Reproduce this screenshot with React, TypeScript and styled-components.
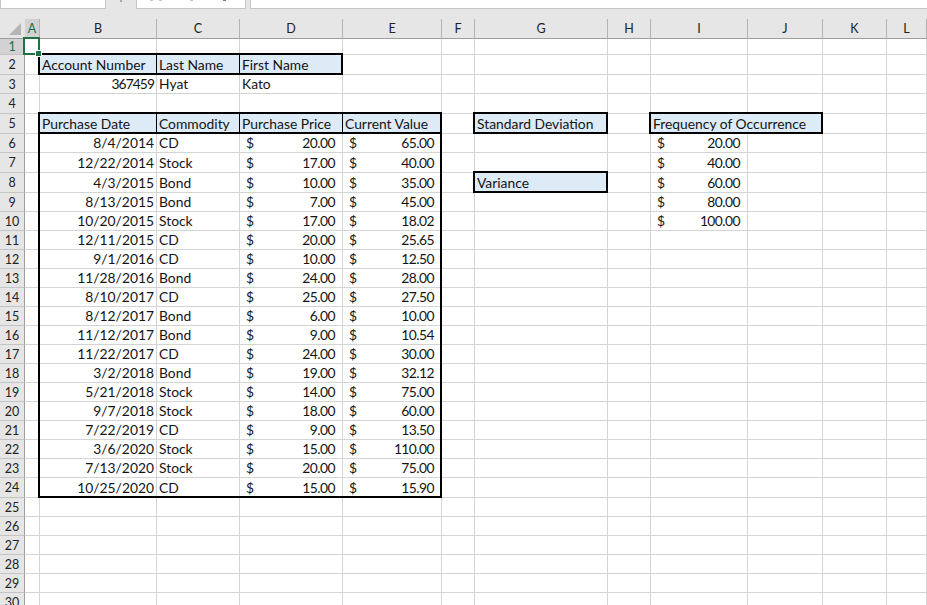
import { createGlobalStyle, styled } from "styled-components";

const GlobalStyle = createGlobalStyle`
  html, body {
    margin: 0;
    padding: 0;
    background: #ffffff;
    overflow: hidden;
  }
`;

const Window = styled.div`
  width: 927px;
  height: 605px;
  overflow: hidden;
  background: #e6e6e6;
  font-family: Lato, "Liberation Sans", sans-serif;
  font-size: 13.85px;
  color: #141414;
`;

const FormulaBar = styled.div`
  height: 19px;
  display: flex;
  align-items: flex-start;
  background: #e6e6e6;
`;

const NameBox = styled.div`
  width: 106px;
  height: 9px;
  overflow: hidden;
  padding-left: 10px;
  background: #fff;
  border: 1px solid #c6c6c6;
  border-top: none;
  box-sizing: border-box;
`;

const NameText = styled.div`
  margin-top: -13px;
  line-height: 16px;
  color: #2a5f8a;
`;

const Grip = styled.div`
  width: 2px;
  height: 2px;
  margin: 0 14px 0 14px;
  background: #a8a8a8;
`;

const FnBox = styled.div`
  width: 110px;
  height: 9px;
  display: flex;
  padding-left: 13px;
  background: #fff;
  border: 1px solid #c6c6c6;
  border-top: none;
  box-sizing: border-box;
`;

const FnMark = styled.div<{ $gap: number; $dark?: boolean }>`
  width: 3px;
  height: 1px;
  margin-left: ${(p) => p.$gap}px;
  background: ${(p) => (p.$dark ? "#7a7a7a" : "#c8c8c8")};
`;

const FormulaInput = styled.div`
  flex: 1;
  height: 9px;
  margin-left: 4px;
  background: #fff;
  border-left: 1px solid #c6c6c6;
  border-bottom: 1px solid #c6c6c6;
  box-sizing: border-box;
`;

const Sheet = styled.div`
  display: grid;
  grid-template-columns: 25px 15px 117px 83px 103px 99px 33px 133px 43px 97px 75px 64px 40px;
  grid-template-rows: 20px 16px 20px 19px 20px 20px 19px 20px 20px 19px 19px repeat(13, 19px) 20px repeat(6, 19px);
  background: #fff;
`;

const Corner = styled.div`
  background: #e6e6e6;
  border-bottom: 1px solid #9e9e9e;
  box-sizing: border-box;
`;

const Triangle = styled.div`
  width: 0;
  height: 0;
  margin: 4px 0 0 9px;
  border-style: solid;
  border-width: 0 0 12px 12px;
  border-color: transparent transparent #b5b5b5 transparent;
`;

const ColHead = styled.div<{ $active?: boolean }>`
  display: flex;
  align-items: center;
  justify-content: center;
  background: ${(p) => (p.$active ? "#d2d2d2" : "#e6e6e6")};
  color: ${(p) => (p.$active ? "#1f6e43" : "#222")};
  border-right: 1px solid #b4b4b4;
  border-bottom: 1px solid #9e9e9e;
  box-sizing: border-box;
  font-size: 12.5px;
`;

const RowHead = styled.div<{ $active?: boolean }>`
  display: flex;
  align-items: center;
  justify-content: center;
  background: ${(p) => (p.$active ? "#d2d2d2" : "#e6e6e6")};
  color: ${(p) => (p.$active ? "#1f6e43" : "#222")};
  border-right: 1px solid #9e9e9e;
  border-bottom: 1px solid #c4c4c4;
  box-sizing: border-box;
  font-size: 12.5px;
`;

type Edges = { t?: boolean; b?: boolean; l?: boolean; r?: boolean };

const Cell = styled.div<{
  $head?: boolean;
  $right?: boolean;
  $divider?: boolean;
  $spill?: boolean;
  $edges?: Edges;
}>`
  position: relative;
  display: flex;
  align-items: flex-end;
  justify-content: ${(p) => (p.$right ? "flex-end" : "flex-start")};
  min-width: 0;
  white-space: nowrap;
  padding: 0 ${(p) => (p.$right ? "2px" : "1px")} 1px 2px;
  box-sizing: border-box;
  line-height: 16px;
  background: ${(p) => (p.$head ? "#ddebf7" : "#fff")};
  border-right: 1px solid
    ${(p) => (p.$divider ? "#000" : p.$spill ? "#ddebf7" : "#d4d4d4")};
  border-bottom: 1px solid #d4d4d4;

  /* thick black range outline, sits on top of the gridlines */
  &::after {
    content: "";
    display: ${(p) => (p.$edges ? "block" : "none")};
    position: absolute;
    pointer-events: none;
    top: ${(p) => (p.$edges?.t ? "-2px" : "0")};
    left: ${(p) => (p.$edges?.l ? "-2px" : "0")};
    right: -1px;
    bottom: -1px;
    border-style: solid;
    border-color: #000;
    border-width: ${(p) => (p.$edges?.t ? "2px" : "0")} ${(p) => (p.$edges?.r ? "2px" : "0")}
      ${(p) => (p.$edges?.b ? "2px" : "0")} ${(p) => (p.$edges?.l ? "2px" : "0")};
  }
`;

const Accounting = styled(Cell)`
  justify-content: space-between;
  padding: 0 7px 1px 6px;
`;

const SpillText = styled.span`
  position: relative;
  z-index: 1;
`;

const Digits = styled.span`
  letter-spacing: -0.55px;
`;

const AccountDigits = styled.span`
  letter-spacing: -0.95px;
`;

const Selection = styled.div`
  position: absolute;
  z-index: 3;
  top: -2px;
  left: -2px;
  right: -1px;
  bottom: -1px;
  border: 2px solid #1f7246;

  &::after {
    content: "";
    position: absolute;
    right: -4px;
    bottom: -4px;
    width: 5px;
    height: 5px;
    background: #1f7246;
    border: 1px solid #fff;
  }
`;

const columns = ["A", "B", "C", "D", "E", "F", "G", "H", "I", "J", "K", "L"];

const purchases = [
  ["8/4/2014", "CD", "20.00", "65.00"],
  ["12/22/2014", "Stock", "17.00", "40.00"],
  ["4/3/2015", "Bond", "10.00", "35.00"],
  ["8/13/2015", "Bond", "7.00", "45.00"],
  ["10/20/2015", "Stock", "17.00", "18.02"],
  ["12/11/2015", "CD", "20.00", "25.65"],
  ["9/1/2016", "CD", "10.00", "12.50"],
  ["11/28/2016", "Bond", "24.00", "28.00"],
  ["8/10/2017", "CD", "25.00", "27.50"],
  ["8/12/2017", "Bond", "6.00", "10.00"],
  ["11/12/2017", "Bond", "9.00", "10.54"],
  ["11/22/2017", "CD", "24.00", "30.00"],
  ["3/2/2018", "Bond", "19.00", "32.12"],
  ["5/21/2018", "Stock", "14.00", "75.00"],
  ["9/7/2018", "Stock", "18.00", "60.00"],
  ["7/22/2019", "CD", "9.00", "13.50"],
  ["3/6/2020", "Stock", "15.00", "110.00"],
  ["7/13/2020", "Stock", "20.00", "75.00"],
  ["10/25/2020", "CD", "15.00", "15.90"],
];

const frequency = ["20.00", "40.00", "60.00", "80.00", "100.00"];

const headers: Record<string, string> = {
  B2: "Account Number",
  C2: "Last Name",
  D2: "First Name",
  B5: "Purchase Date",
  C5: "Commodity",
  D5: "Purchase Price",
  E5: "Current Value",
  G5: "Standard Deviation",
  G8: "Variance",
  I5: "Frequency of Occurrence",
  J5: "",
};

function edgesFor(col: string, row: number): Edges | undefined {
  if (row === 2 && "BCD".includes(col)) {
    return { t: true, b: true, l: col === "B", r: col === "D" };
  }
  if (row === 5 && "BCDE".includes(col)) {
    return { t: true, b: true, l: col === "B", r: col === "E" };
  }
  if (row >= 6 && row <= 24 && "BCDE".includes(col)) {
    return { b: row === 24, l: col === "B", r: col === "E" };
  }
  if ((row === 5 || row === 8) && col === "G") {
    return { t: true, b: true, l: true, r: true };
  }
  if (row === 5 && (col === "I" || col === "J")) {
    return { t: true, b: true, l: col === "I", r: col === "J" };
  }
  return undefined;
}

function renderCell(col: string, row: number) {
  const key = `${col}${row}`;
  const edges = edgesFor(col, row);
  const divider = (row === 2 && "BC".includes(col)) || (row === 5 && "BCD".includes(col));

  if (key in headers) {
    return (
      <Cell key={key} $head $edges={edges} $divider={divider} $spill={key === "I5"}>
        <SpillText>{headers[key]}</SpillText>
      </Cell>
    );
  }
  if (key === "B3") {
    return (
      <Cell key={key} $right>
        <AccountDigits>367459</AccountDigits>
      </Cell>
    );
  }
  if (key === "C3") return <Cell key={key}>Hyat</Cell>;
  if (key === "D3") return <Cell key={key}>Kato</Cell>;
  if (row >= 6 && row <= 24 && "BCDE".includes(col)) {
    const purchase = purchases[row - 6];
    if (col === "B" || col === "C") {
      return (
        <Cell key={key} $right={col === "B"} $edges={edges}>
          {purchase[col === "B" ? 0 : 1]}
        </Cell>
      );
    }
    return (
      <Accounting key={key} $edges={edges}>
        <span>$</span>
        <Digits>{purchase[col === "D" ? 2 : 3]}</Digits>
      </Accounting>
    );
  }
  if (row >= 6 && row <= 10 && col === "I") {
    return (
      <Accounting key={key}>
        <span>$</span>
        <Digits>{frequency[row - 6]}</Digits>
      </Accounting>
    );
  }
  return <Cell key={key}>{key === "A1" && <Selection />}</Cell>;
}

const rows = Array.from({ length: 30 }, (_, i) => i + 1);

export default function App() {
  return (
    <Window>
      <GlobalStyle />
      <FormulaBar>
        <NameBox>
          <NameText>A1</NameText>
        </NameBox>
        <Grip />
        <FnBox>
          <FnMark $gap={0} />
          <FnMark $gap={6} />
          <FnMark $gap={28} />
          <FnMark $gap={30} $dark />
        </FnBox>
        <FormulaInput />
      </FormulaBar>
      <Sheet>
        <Corner>
          <Triangle />
        </Corner>
        {columns.map((c) => (
          <ColHead key={c} $active={c === "A"}>
            {c}
          </ColHead>
        ))}
        {rows.map((r) => [
          <RowHead key={`h${r}`} $active={r === 1}>
            {r}
          </RowHead>,
          ...columns.map((c) => renderCell(c, r)),
        ])}
      </Sheet>
    </Window>
  );
}
